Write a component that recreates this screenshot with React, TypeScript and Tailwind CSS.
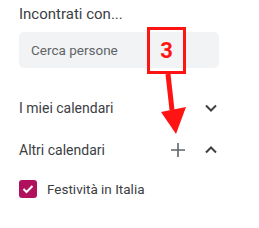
import React from "react";

export default function App() {
  return (
    <div
      className="relative w-[259px] h-[228px] bg-white overflow-hidden"
      style={{ fontFamily: "Roboto, 'Liberation Sans', sans-serif" }}
    >
      <div className="pl-[19px] pr-[40px] pt-[4px]">
        <div className="h-[20px] leading-[20px] text-[15px] text-[#3c4043]">Incontrati con...</div>
        <div className="mt-[8px] h-[36px] w-[200px] rounded-[5px] bg-[#f1f3f4] flex items-center pl-[12px] text-[13.5px] text-[#5f6368]">
          Cerca persone
        </div>
        <div className="mt-[20px] h-[40px] flex items-center justify-between pr-[0px]">
          <span className="text-[14px] text-[#3c4043]">I miei calendari</span>
          <span className="w-[24px] h-[24px] flex items-center justify-center mr-[-4px]">
            <svg width="12" height="8" viewBox="0 0 12 8">
              <path d="M1 1.5 L6 6.5 L11 1.5" fill="none" stroke="#3c4043" strokeWidth="2" />
            </svg>
          </span>
        </div>
        <div className="mt-[2px] h-[40px] flex items-center">
          <span className="text-[14px] text-[#3c4043] flex-1">Altri calendari</span>
          <span className="w-[24px] h-[24px] flex items-center justify-center mr-[9px]">
            <svg width="14" height="14" viewBox="0 0 14 14">
              <path d="M7 0 V14 M0 7 H14" fill="none" stroke="#5f6368" strokeWidth="1.6" />
            </svg>
          </span>
          <span className="w-[24px] h-[24px] flex items-center justify-center mr-[-4px]">
            <svg width="12" height="8" viewBox="0 0 12 8">
              <path d="M1 6.5 L6 1.5 L11 6.5" fill="none" stroke="#3c4043" strokeWidth="2" />
            </svg>
          </span>
        </div>
        <div className="mt-[0px] h-[38px] flex items-center gap-[10px]">
          <span className="w-[18px] h-[18px] rounded-[3px] bg-[#b0105c] flex items-center justify-center">
            <svg width="12" height="10" viewBox="0 0 12 10">
              <path d="M1.5 5 L4.5 8 L10.5 2" fill="none" stroke="#ffffff" strokeWidth="2" />
            </svg>
          </span>
          <span className="text-[13.5px] text-[#3c4043]">Festività in Italia</span>
        </div>
      </div>

      {/* annotation */}
      <div className="absolute left-[147px] top-[27px] w-[39px] h-[47px] border-[3px] border-[#ff1414] flex items-center justify-center">
        <span className="text-[22px] font-bold text-[#ff1414] leading-none">3</span>
      </div>
      <svg className="absolute left-0 top-0" width="259" height="228" viewBox="0 0 259 228">
        <path d="M168 74 L172 110" stroke="#ff1414" strokeWidth="5" fill="none" />
        <path d="M161 112 L186 107 L176 134 Z" fill="#ff1414" />
      </svg>
    </div>
  );
}
